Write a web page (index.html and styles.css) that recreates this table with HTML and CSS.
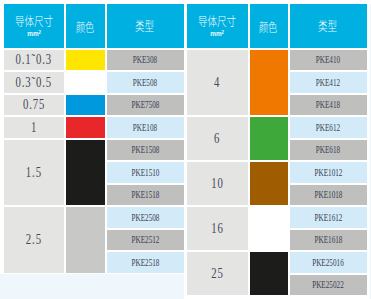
FILE: index.html
```html
<!DOCTYPE html>
<html lang="zh">
<head>
<meta charset="utf-8">
<link rel="stylesheet" href="styles.css">
</head>
<body>
<div class="page">
  <div class="leftcol">
    <div class="tbl tbl-left">
      <div class="hd"><span class="sx">导体尺寸</span><span class="unit">mm<sup>2</sup></span></div>
      <div class="hd"><span class="sx hsm">颜色</span></div>
      <div class="hd"><span class="sx">类型</span></div>

      <div class="sz"><span class="sx">0.1˜0.3</span></div>
      <div class="col yellow"></div>
      <div class="ty g"><span class="sx">PKE308</span></div>

      <div class="sz"><span class="sx">0.3˜0.5</span></div>
      <div class="col white"></div>
      <div class="ty b"><span class="sx">PKE508</span></div>

      <div class="sz"><span class="sx">0.75</span></div>
      <div class="col blue"></div>
      <div class="ty g"><span class="sx">PKE7508</span></div>

      <div class="sz"><span class="sx">1</span></div>
      <div class="col red"></div>
      <div class="ty b"><span class="sx">PKE108</span></div>

      <div class="sz span3"><span class="sx">1.5</span></div>
      <div class="col black span3"></div>
      <div class="ty g"><span class="sx">PKE1508</span></div>
      <div class="ty b"><span class="sx">PKE1510</span></div>
      <div class="ty g"><span class="sx">PKE1518</span></div>

      <div class="sz span3"><span class="sx">2.5</span></div>
      <div class="col grey span3"></div>
      <div class="ty b"><span class="sx">PKE2508</span></div>
      <div class="ty g"><span class="sx">PKE2512</span></div>
      <div class="ty b"><span class="sx">PKE2518</span></div>
    </div>
    <div class="fill"></div>
  </div>

  <div class="tbl tbl-right">
    <div class="hd"><span class="sx">导体尺寸</span><span class="unit">mm<sup>2</sup></span></div>
    <div class="hd"><span class="sx hsm">颜色</span></div>
    <div class="hd"><span class="sx">类型</span></div>

    <div class="sz span3"><span class="sx">4</span></div>
    <div class="col orange span3"></div>
    <div class="ty g"><span class="sx">PKE410</span></div>
    <div class="ty b"><span class="sx">PKE412</span></div>
    <div class="ty g"><span class="sx">PKE418</span></div>

    <div class="sz span2"><span class="sx">6</span></div>
    <div class="col green span2"></div>
    <div class="ty b"><span class="sx">PKE612</span></div>
    <div class="ty g"><span class="sx">PKE618</span></div>

    <div class="sz span2"><span class="sx">10</span></div>
    <div class="col brown span2"></div>
    <div class="ty b"><span class="sx">PKE1012</span></div>
    <div class="ty g"><span class="sx">PKE1018</span></div>

    <div class="sz span2"><span class="sx">16</span></div>
    <div class="col white span2"></div>
    <div class="ty b"><span class="sx">PKE1612</span></div>
    <div class="ty g"><span class="sx">PKE1618</span></div>

    <div class="sz span2"><span class="sx">25</span></div>
    <div class="col black span2"></div>
    <div class="ty b"><span class="sx">PKE25016</span></div>
    <div class="ty g"><span class="sx">PKE25022</span></div>
  </div>
  <div class="edge"></div>
</div>
</body>
</html>
```

FILE: styles.css
```css
html, body {
  margin: 0;
  padding: 0;
  background: #ffffff;
}

.page {
  display: flex;
  align-items: stretch;
  height: 299px;
  padding: 4px 0 0 4px;
  box-sizing: border-box;
  gap: 3px;
  overflow: hidden;
}

.leftcol {
  display: flex;
  flex-direction: column;
}

.fill {
  flex: 1;
  margin-top: 1px;
  margin-left: -4px;
  background: #eff7fc;
}

.edge {
  width: 4px;
  background: #eaf5fb;
}

.tbl {
  display: grid;
  grid-template-rows: 43.5px repeat(11, 20.5px);
  row-gap: 2px;
  align-content: start;
  background: #ffffff;
}

.tbl-left {
  grid-template-rows: 43.5px repeat(10, 20.5px);
  grid-template-columns: 60px 39.5px 77px;
  column-gap: 1.5px;
}

.tbl-right {
  grid-template-columns: 61px 38px 77px;
  column-gap: 2px;
}

.hd {
  background: #00b0e1;
  color: #f4fbfe;
  display: flex;
  flex-direction: column;
  align-items: center;
  justify-content: center;
  font-family: "Noto Sans CJK SC", sans-serif;
  font-weight: 300;
  font-size: 12.5px;
  line-height: 13px;
}

.hd .sx {
  transform: scaleX(0.76);
}

.hd .hsm {
  font-size: 12px;
  margin-top: 2px;
}

.unit {
  font-family: "Liberation Sans", sans-serif;
  font-weight: bold;
  font-size: 7.5px;
  line-height: 7px;
  margin-top: 3px;
  transform: scaleX(0.85);
}

.unit sup {
  font-size: 5px;
  vertical-align: 2px;
  line-height: 0;
}

.sx {
  display: inline-block;
  transform: scaleX(0.74);
  white-space: nowrap;
}

.sz {
  grid-column: 1;
  background: #e4e4e2;
  display: flex;
  align-items: center;
  justify-content: center;
  font-family: "Liberation Serif", serif;
  font-size: 14.5px;
  letter-spacing: 1.2px;
  color: #45485a;
}

.col {
  grid-column: 2;
}

.ty {
  grid-column: 3;
  display: flex;
  align-items: center;
  justify-content: center;
  font-family: "Liberation Serif", serif;
  font-size: 10px;
  color: #3c4254;
}

.ty .sx {
  transform: scaleX(0.72);
}

.span2 { grid-row: span 2; }
.span3 { grid-row: span 3; }

.g { background: #bfbfbd; }
.b { background: #d3ebf8; }

.yellow { background: #ffe600; }
.white { background: #ffffff; }
.blue { background: #0099de; }
.red { background: #e8272b; }
.black { background: #1c1c1a; }
.grey { background: #c8c8c6; }
.orange { background: #f07700; }
.green { background: #3ea93a; }
.brown { background: #9f5c00; }
```
